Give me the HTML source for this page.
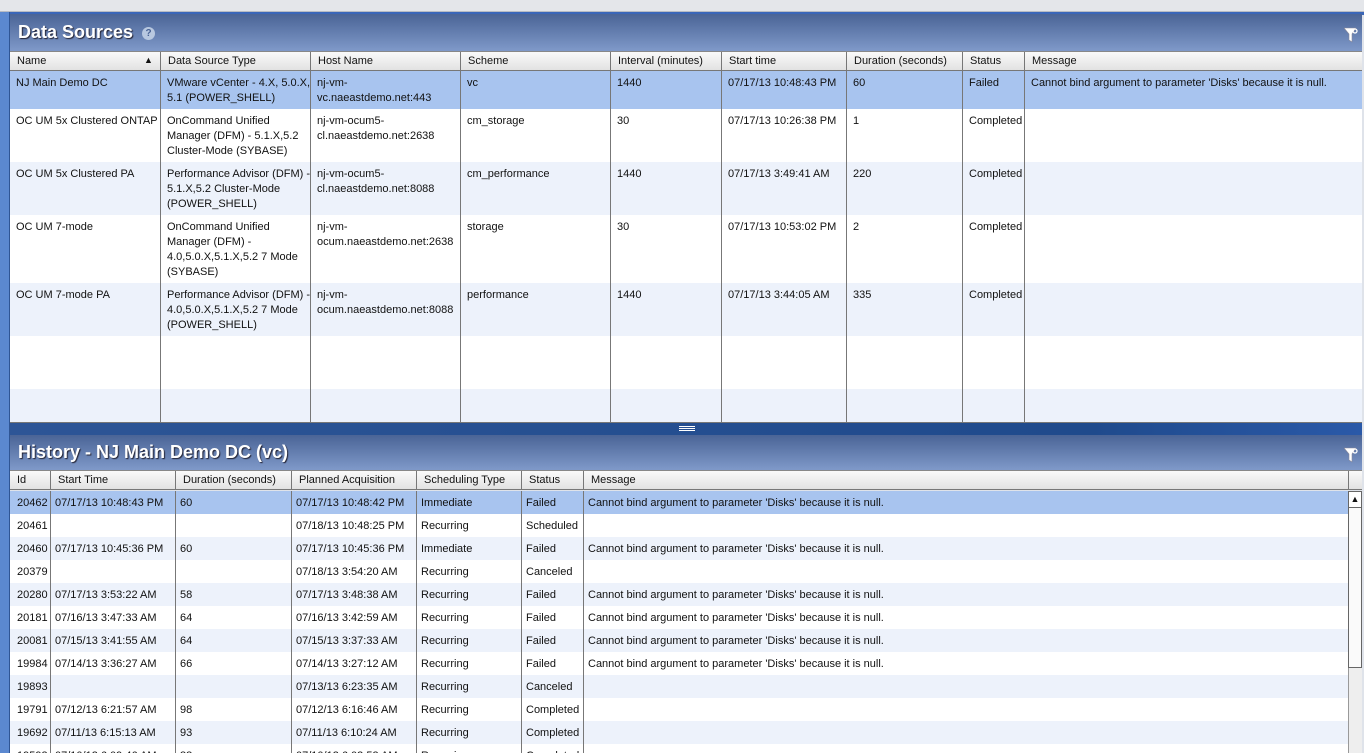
<!DOCTYPE html><html><head><style>
*{margin:0;padding:0;box-sizing:border-box}
html,body{width:1364px;height:753px;overflow:hidden}
body{background:#dfe3ea;font-family:"Liberation Sans",sans-serif;font-size:11px;color:#111;position:relative}
.top{position:absolute;left:0;top:0;width:1364px;height:12px;background:#e4e6ea;border-bottom:1px solid #b8bcc4}
.lstrip{position:absolute;left:0;top:12px;width:10px;height:741px;background:#5b88d0;border-right:1px solid #2f5595}
.bar{position:absolute;left:10px;width:1352px;background:linear-gradient(#4a6496,#7f99c9);color:#fff;font-weight:bold;font-size:18px;padding-left:8px;text-shadow:1px 1px 1px #223}
.hd{position:absolute;left:10px;height:20px;background:linear-gradient(#fafafa,#e2e2e2);border-top:1px solid #888;border-bottom:1px solid #777}
.hd div,.row div{position:absolute;top:0;height:100%;padding:3px 0 0 7px;border-left:1px solid #777;white-space:nowrap;overflow:hidden}
.row{position:absolute;left:10px;overflow:hidden}
.row div{padding-top:5px;line-height:15px}
.h div.c0,.row div.c0{border-left:none}
.hrow div{padding-left:4px}
.hrow div.c0{padding-left:7px}
.funnel{position:absolute;right:6px;width:14px;height:16px}
</style></head><body>
<div class="top"></div>
<div class="lstrip"></div>
<div style="position:absolute;left:10px;top:12px;width:1354px;height:3px;background:#3a66b8"></div>
<div class="bar" style="top:14px;height:37px;line-height:36px">Data Sources <span style="display:inline-block;width:13px;height:13px;border-radius:50%;background:#b8c8e0;color:#4a6496;font-size:10px;line-height:13px;text-align:center;vertical-align:2px;text-shadow:none;margin-left:4px">?</span></div>
<svg class="funnel" style="top:27px" viewBox="0 0 14 16"><path d="M0 1h12L8 7v8L5 13V7z" fill="#fff" stroke="#889" stroke-width=".6"/><circle cx="11" cy="4" r="2" fill="none" stroke="#fff" stroke-width="1.3"/></svg>
<div class="hd" style="top:51px;width:1352px">
<div class="c0" style="left:0;width:150px;border:none">Name<span style="position:absolute;left:134px;font-size:9px">▲</span></div>
<div style="left:150px">Data Source Type</div><div style="left:300px">Host Name</div><div style="left:450px">Scheme</div><div style="left:600px">Interval (minutes)</div><div style="left:711px">Start time</div><div style="left:836px">Duration (seconds)</div><div style="left:952px">Status</div><div style="left:1014px">Message</div>
</div>
<div id="ds"></div>
<div style="position:absolute;left:10px;top:422px;width:1352px;height:1px;background:#777"></div>
<div style="position:absolute;left:10px;top:423px;width:1352px;height:12px;background:linear-gradient(90deg,#2d5596,#1f4a8c 80%,#2a59a8)"><div style="position:absolute;left:669px;top:3px;width:16px;height:5px;border-top:1px solid #fff;border-bottom:1px solid #fff"></div><div style="position:absolute;left:669px;top:5px;width:16px;height:1px;background:#fff"></div></div>
<div class="bar" style="top:435px;height:35px;line-height:34px">History - NJ Main Demo DC (vc)</div>
<svg class="funnel" style="top:447px" viewBox="0 0 14 16"><path d="M0 1h12L8 7v8L5 13V7z" fill="#fff" stroke="#889" stroke-width=".6"/><circle cx="11" cy="4" r="2" fill="none" stroke="#fff" stroke-width="1.3"/></svg>
<div class="hd" style="top:470px;width:1352px">
<div class="c0" style="left:0;border:none">Id</div><div style="left:40px">Start Time</div><div style="left:165px">Duration (seconds)</div><div style="left:281px">Planned Acquisition</div><div style="left:406px">Scheduling Type</div><div style="left:511px">Status</div><div style="left:573px">Message</div><div style="left:1338px;width:14px"></div>
</div>
<div id="hs"></div>
<div style="position:absolute;left:1348px;top:491px;width:14px;height:262px;background:#eee;border-left:1px solid #999"></div>
<div style="position:absolute;left:1348px;top:491px;width:14px;height:177px;background:#fafafa;border:1px solid #666"></div>
<div style="position:absolute;left:1348px;top:491px;width:14px;height:17px;border:1px solid #666;font-size:9px;text-align:center;line-height:15px;background:#fff">▲</div>
<script>
var dsC=[0,150,300,450,600,711,836,952,1014],dsW=[150,150,150,150,111,125,116,62,338];
var ds=[[71,38,"#a8c4ef",["NJ Main Demo DC","VMware vCenter - 4.X, 5.0.X,<br>5.1 (POWER_SHELL)","nj-vm-<br>vc.naeastdemo.net:443","vc","1440","07/17/13 10:48:43 PM","60","Failed","Cannot bind argument to parameter 'Disks' because it is null."]],
[109,53,"#fff",["OC UM 5x Clustered ONTAP","OnCommand Unified<br>Manager (DFM) - 5.1.X,5.2<br>Cluster-Mode (SYBASE)","nj-vm-ocum5-<br>cl.naeastdemo.net:2638","cm_storage","30","07/17/13 10:26:38 PM","1","Completed",""]],
[162,53,"#edf2fb",["OC UM 5x Clustered PA","Performance Advisor (DFM) -<br>5.1.X,5.2 Cluster-Mode<br>(POWER_SHELL)","nj-vm-ocum5-<br>cl.naeastdemo.net:8088","cm_performance","1440","07/17/13 3:49:41 AM","220","Completed",""]],
[215,68,"#fff",["OC UM 7-mode","OnCommand Unified<br>Manager (DFM) -<br>4.0,5.0.X,5.1.X,5.2 7 Mode<br>(SYBASE)","nj-vm-<br>ocum.naeastdemo.net:2638","storage","30","07/17/13 10:53:02 PM","2","Completed",""]],
[283,53,"#edf2fb",["OC UM 7-mode PA","Performance Advisor (DFM) -<br>4.0,5.0.X,5.1.X,5.2 7 Mode<br>(POWER_SHELL)","nj-vm-<br>ocum.naeastdemo.net:8088","performance","1440","07/17/13 3:44:05 AM","335","Completed",""]],
[336,53,"#fff",["","","","","","","","",""]],[389,33,"#edf2fb",["","","","","","","","",""]]];
var h="";ds.forEach(function(r){h+='<div class="row" style="top:'+r[0]+'px;height:'+r[1]+'px;width:1352px;background:'+r[2]+'">';r[3].forEach(function(t,i){h+='<div class="c'+i+'" style="left:'+dsC[i]+'px;width:'+dsW[i]+'px;padding-left:6px">'+t+'</div>'});h+='</div>'});
document.getElementById('ds').innerHTML=h;
var hC=[0,40,165,281,406,511,573],hW=[40,125,116,125,105,62,765];
var M="Cannot bind argument to parameter 'Disks' because it is null.";
var hs=[["20462","07/17/13 10:48:43 PM","60","07/17/13 10:48:42 PM","Immediate","Failed",M],["20461","","","07/18/13 10:48:25 PM","Recurring","Scheduled",""],["20460","07/17/13 10:45:36 PM","60","07/17/13 10:45:36 PM","Immediate","Failed",M],["20379","","","07/18/13 3:54:20 AM","Recurring","Canceled",""],["20280","07/17/13 3:53:22 AM","58","07/17/13 3:48:38 AM","Recurring","Failed",M],["20181","07/16/13 3:47:33 AM","64","07/16/13 3:42:59 AM","Recurring","Failed",M],["20081","07/15/13 3:41:55 AM","64","07/15/13 3:37:33 AM","Recurring","Failed",M],["19984","07/14/13 3:36:27 AM","66","07/14/13 3:27:12 AM","Recurring","Failed",M],["19893","","","07/13/13 6:23:35 AM","Recurring","Canceled",""],["19791","07/12/13 6:21:57 AM","98","07/12/13 6:16:46 AM","Recurring","Completed",""],["19692","07/11/13 6:15:13 AM","93","07/11/13 6:10:24 AM","Recurring","Completed",""],["19593","07/10/13 6:09:46 AM","88","07/10/13 6:03:53 AM","Recurring","Completed",""]];
h="";hs.forEach(function(r,k){var bg=k==0?"#a8c4ef":(k%2?"#fff":"#edf2fb");h+='<div class="row hrow" style="top:'+(491+23*k)+'px;height:23px;width:1338px;background:'+bg+'">';r.forEach(function(t,i){h+='<div class="c'+i+'" style="left:'+hC[i]+'px;width:'+hW[i]+'px">'+t+'</div>'});h+='</div>'});
document.getElementById('hs').innerHTML=h;
</script>
</body></html>
